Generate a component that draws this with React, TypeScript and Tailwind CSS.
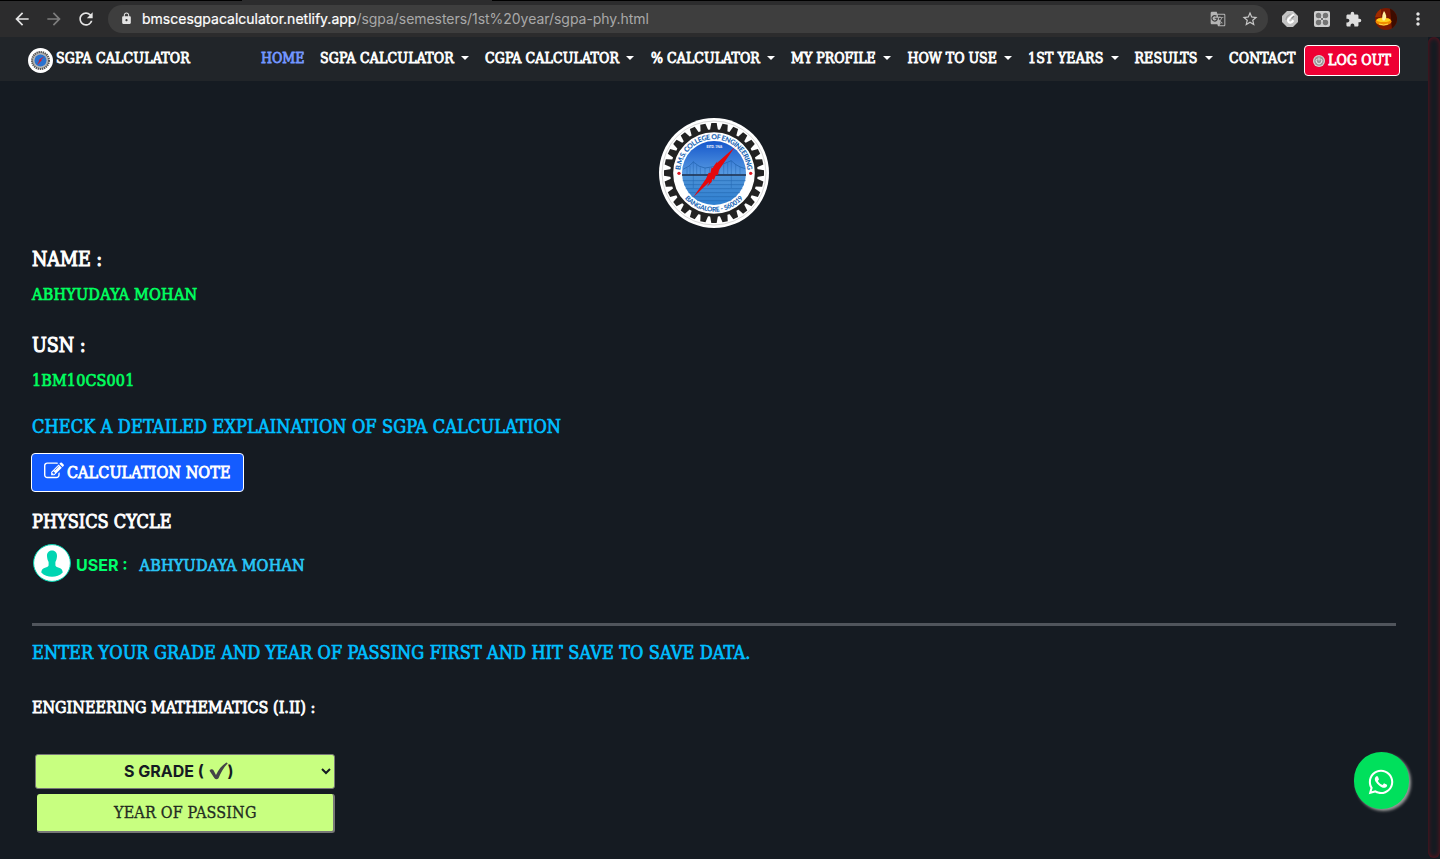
import React from "react";
import { MdArrowBack, MdArrowForward, MdRefresh, MdLock, MdGTranslate, MdStarBorder, MdExtension, MdMoreVert } from "react-icons/md";
import { FaWhatsapp } from "react-icons/fa";

const serif = "font-['DejaVu_Serif_Condensed','DejaVu_Serif',serif] whitespace-nowrap";
const semi = "[-webkit-text-stroke:0.8px_currentColor]";
const medium = "[-webkit-text-stroke:0.7px_currentColor]";

const teeth = Array.from({ length: 28 }, (_, i) => (i * 360) / 28);

function Crest({ className }: { className: string }) {
  return (
    <svg viewBox="0 0 330 330" className={className}>
      <defs>
        <linearGradient id="sky" x1="0" y1="0" x2="0" y2="1">
          <stop offset="0" stopColor="#1557cc" />
          <stop offset="0.5" stopColor="#5598e0" />
          <stop offset="0.56" stopColor="#4a90d6" />
          <stop offset="1" stopColor="#2f7fd0" />
        </linearGradient>
        <path id="arcTop" d="M64 165 A101 101 0 0 1 266 165" />
        <path id="arcBottom" d="M49 165 A116 116 0 0 0 281 165" />
      </defs>
      <circle cx="165" cy="165" r="165" fill="#fff" />
      <circle cx="165" cy="165" r="156" fill="none" stroke="#c4c4c4" strokeWidth="2" />
      <circle cx="165" cy="165" r="127" fill="none" stroke="#222" strokeWidth="9" />
      {teeth.map((a) => (
        <path key={a} d="M153 37L157 15H173L177 37Z" fill="#222" transform={`rotate(${a} 165 165)`} />
      ))}
      <circle cx="165" cy="165" r="96" fill="url(#sky)" />
      <g stroke="#1d5ea8" fill="none" strokeWidth="2">
        <path d="M72 154 Q92 146 103 132 Q120 148 138 150 Q180 148 217 128 Q230 144 259 152" />
        <path d="M103 130V210M217 128V210M84 150v18M93 144v24M113 141v27M124 148v20M138 150v18M152 150v18M166 149v19M180 146v22M194 140v28M206 135v33M230 140v28M243 147v21" strokeWidth="1.2" />
        <path d="M71 188H260M75 200H255M80 212H250M88 224H243M98 236H232M114 248H217" stroke="#246bb4" />
      </g>
      <path d="M69 171H261" stroke="#1c2c48" strokeWidth="5" />
      <path d="M227 88L173 136L175 130L165 143L161 151L158 148L154 165L149 164L141 182L103 238L150 193L148 199L144 206L158 192L160 182L165 186L171 170L177 171L180 156Z" fill="#e5080c" />
      <circle cx="60" cy="166" r="5" fill="#e01822" />
      <circle cx="275" cy="166" r="5" fill="#e01822" />
      <g fill="#1765b4" fontFamily="Lato, sans-serif" fontWeight="900">
        <text fontSize="21" textAnchor="middle">
          <textPath href="#arcTop" startOffset="50%" textLength="300">B.M.S. COLLEGE OF ENGINEERING</textPath>
        </text>
        <text fontSize="20" textAnchor="middle">
          <textPath href="#arcBottom" startOffset="50%" textLength="198">BANGALORE - 560019</textPath>
        </text>
      </g>
      <text x="166" y="90" fontSize="9" fontWeight="700" fontFamily="Lato, sans-serif" fill="#fff" textAnchor="middle">ESTD. 1946</text>
    </svg>
  );
}

function MiniCrest() {
  return (
    <svg viewBox="0 0 25 25" className="size-[25px] shrink-0">
      <circle cx="12.5" cy="12.5" r="12.5" fill="#fff" />
      <circle cx="12.5" cy="12.5" r="8.5" fill="#b4b4b4" stroke="#555" strokeWidth="2" strokeDasharray="1.4 .7" />
      <circle cx="12.5" cy="12.5" r="6" fill="#2a72cf" />
      <path d="M15.500 9l-2.500 2.700.5.700-4 4 2-3.600-.5-.700z" fill="#e0182a" stroke="#e0182a" strokeWidth=".3" />
    </svg>
  );
}

const nav = [
  { label: "HOME", box: "w-[58px] -ml-px mr-px", caret: false, tone: "text-[#7396ff]" },
  { label: "SGPA CALCULATOR", box: "w-[165px] tracking-[0.18px]", caret: true, tone: "text-white" },
  { label: "CGPA CALCULATOR", box: "w-[166px] tracking-[0.12px]", caret: true, tone: "text-white" },
  { label: "% CALCULATOR", box: "w-[140px] tracking-[0.05px]", caret: true, tone: "text-white" },
  { label: "MY PROFILE", box: "w-[116.5px]", caret: true, tone: "text-white" },
  { label: "HOW TO USE", box: "w-[120.5px]", caret: true, tone: "text-white" },
  { label: "1ST YEARS", box: "w-[106.5px] tracking-[0.2px]", caret: true, tone: "text-white" },
  { label: "RESULTS", box: "w-[94.5px] tracking-[0.12px]", caret: true, tone: "text-white" },
  { label: "CONTACT", box: "w-[75px] tracking-[0.12px]", caret: false, tone: "text-white" },
];

function BrowserBar() {
  return (
    <div className="h-[37px] bg-[#2c2c2d] font-['Inter',sans-serif] text-[#e4e4e4]">
      <div className="flex h-px justify-between bg-black pl-[242px]">
        <span className="w-[250px] bg-[#2c2c2d]" />
      </div>
      <div className="flex h-9 items-center">
        <MdArrowBack className="ml-3 size-5" />
        <MdArrowForward className="ml-3 size-5 text-[#7d7d7d]" />
        <MdRefresh className="ml-3 size-5" />
        <div className="ml-3 flex h-7 w-[1160px] items-center rounded-full bg-[#3e3e3e] pl-3 pr-[9px]">
          <MdLock className="-mt-0.5 size-[13px]" />
          <div className="ml-[9px] whitespace-pre text-sm leading-5">
            <span className="text-white [-webkit-text-stroke:0.2px_currentColor]">bmscesgpacalculator.netlify.app</span>
            <span className="tracking-[-0.04px] text-[#a9a9a9]">/sgpa/semesters/1st%20year/sgpa-phy.html</span>
          </div>
          <MdGTranslate className="ml-auto size-4 text-[#b5b5b5]" />
          <MdStarBorder className="ml-[15px] size-[18px] text-[#c8c8c8]" />
        </div>
        <svg viewBox="0 0 16 16" className="ml-[14px] size-4">
          <path d="M5 0h6l5 5v6l-5 5H5l-5-5V5z" fill="#c4c4c4" />
          <path d="M12 3.300L7.500 7Q5 9 6.800 11T11.500 9.300" stroke="#fff" strokeWidth="2.200" fill="none" />
          <path d="M12 5L9.500 7.500" stroke="#888" strokeWidth="1.200" fill="none" />
          <path d="M8.500 3.200Q4 5 4 9" stroke="#a0a0a0" strokeWidth="1.200" fill="none" />
        </svg>
        <svg viewBox="0 0 16 16" className="ml-4 size-4">
          <rect width="16" height="16" rx="2" fill="#cfcfcf" />
          <g fill="#747474">
            <circle cx="4.500" cy="4.500" r="2.700" /><circle cx="11.500" cy="4.500" r="2.700" />
            <circle cx="4.500" cy="11.500" r="2.700" /><circle cx="11.500" cy="11.500" r="2.700" />
          </g>
          <path d="M5 5l6 6M11 5l-6 6" stroke="#747474" strokeWidth="1" />
        </svg>
        <MdExtension className="ml-[15px] size-[17px] text-[#dedede]" />
        <svg viewBox="0 0 22 22" className="ml-[13px] size-[22px]">
          <defs><clipPath id="avatar"><circle cx="11" cy="11" r="11" /></clipPath></defs>
          <g clipPath="url(#avatar)">
            <rect width="22" height="22" fill="#7b1900" />
            <path d="M15 0h7v22h-5z" fill="#3d0c00" />
            <path d="M2 0h4v9H0z" fill="#a02c00" />
            <ellipse cx="8.500" cy="13.500" rx="8" ry="4" fill="#f08c00" />
            <ellipse cx="8.500" cy="12" rx="7" ry="2" fill="#ffd21c" />
            <path d="M4 16q5 2 9 0" stroke="#ffd94a" fill="none" />
            <path d="M9 3q4 5 .8 9.500h-2Q6 9 9 3z" fill="#fff3a0" />
          </g>
        </svg>
        <MdMoreVert className="ml-[11px] size-5" />
      </div>
    </div>
  );
}

function NavBar() {
  return (
    <header className={`flex h-11 bg-[#212529] pl-7 text-sm leading-5 text-white ${serif} ${semi}`}>
      <div className="flex w-[234px] pt-[11px]">
        <MiniCrest />
        <span className="ml-[3px] tracking-[0.18px]">SGPA CALCULATOR</span>
      </div>
      <nav className="flex pt-[11px]">
        {nav.map((n) => (
          <a key={n.label} className={`flex shrink-0 ${n.box} ${n.tone}`}>
            {n.label}
            {n.caret && <span className="ml-[7px] mt-2 h-0 w-0 border-x-4 border-t-4 border-x-transparent border-t-white" />}
          </a>
        ))}
      </nav>
      <button className="mt-2 flex h-[31px] w-24 shrink-0 items-center rounded border border-white bg-[#ee0034] pl-2 tracking-[0.12px]">
        <svg viewBox="0 0 12 12" className="size-3">
          <circle cx="6" cy="6" r="6" fill="#d4d4d4" />
          <circle cx="6" cy="6" r="4.800" fill="#999" />
          <path d="M4.300 3.800a2.800 2.800 0 1 0 3.400 0M6 2.500v3" stroke="#f2f2f2" fill="none" />
        </svg>
        <span className="-mt-px ml-[3px]">LOG OUT</span>
      </button>
    </header>
  );
}

export default function App() {
  return (
    <div className="h-[859px] w-[1440px] overflow-hidden bg-[#151b22]">
      <BrowserBar />
      <div className="flex h-[822px]">
        <div className="w-[1428px]">
          <NavBar />
          <main className={`pl-8 pr-8 text-white ${serif}`}>
            <Crest className="mx-auto mt-[37px] size-[110px]" />
            <h2 className="mt-5 text-[19.5px] leading-6 [-webkit-text-stroke:1px_currentColor]">NAME :</h2>
            <p className={`mt-[13px] text-base leading-5 tracking-[0.24px] text-[#00ff5f] ${medium}`}>ABHYUDAYA MOHAN</p>
            <h2 className="mt-[29px] text-[19.5px] leading-6 [-webkit-text-stroke:1px_currentColor]">USN :</h2>
            <p className={`mt-[13px] text-base leading-5 tracking-[0.13px] text-[#00ff5f] ${medium}`}>1BM10CS001</p>
            <p className={`mt-6 text-lg leading-6 tracking-[0.13px] text-[#00bfff] ${medium}`}>CHECK A DETAILED EXPLAINATION OF SGPA CALCULATION</p>
            <button className={`-ml-px mt-[14px] flex h-[39px] w-[213px] items-center rounded border border-white bg-[#145cff] pl-3 text-base leading-5 tracking-[0.1px] ${semi}`}>
              <svg viewBox="0 0 1792 1792" className="-mt-1 size-[20px]" fill="#fff">
                <path d="M888 1184l116-116-152-152-116 116v56h96v96h56zM1328 464q-16-16-33 1L945 815q-17 17-1 33t33-1l350-350q17-17 1-33zm80 594v190q0 119-84.5 203.5T1120 1536H288q-119 0-203.5-84.5T0 1248V416q0-119 84.5-203.5T288 128h832q63 0 117 25 15 7 18 23 3 17-9 29l-49 49q-14 14-32 8-23-6-45-6H288q-66 0-113 47t-47 113v832q0 66 47 113t113 47h832q66 0 113-47t47-113v-126q0-13 9-22l64-64q15-15 35-7t20 29zM1312 320l288 288-672 672H640V992zm444 132l-92 92-288-288 92-92q28-28 68-28t68 28l152 152q28 28 28 68t-28 68z" />
              </svg>
              <span className="ml-[3px]">CALCULATION NOTE</span>
            </button>
            <h3 className={`mt-[18px] text-lg leading-6 [-webkit-text-stroke:0.9px_currentColor]`}>PHYSICS CYCLE</h3>
            <div className="mt-[10px] flex h-[38px] items-center pl-px text-base leading-5">
              <svg viewBox="0 0 38 38" className="size-[38px]">
                <circle cx="19" cy="19" r="18.400" fill="#fff" stroke="#00d5b2" strokeWidth="1" />
                <path d="M19 6.500c-3.400 0-5.200 2.500-5 5.800.1 2.200.8 4.300 1.600 5.800v3.200c0 1.200-1.500 1.700-3.600 2.500-2.600.8-3.700 2.500-3.700 4.700C11 31.500 15 32.700 19 32.700s8-1.200 10.700-4.200c0-2.200-1.100-3.900-3.700-4.700-2.100-.8-3.600-1.300-3.600-2.500v-3.200c.8-1.500 1.500-3.600 1.600-5.800.2-3.300-1.600-5.800-5-5.800z" fill="#00d5b2" />
              </svg>
              <span className="ml-[5px] mt-1 font-['Inter',sans-serif] font-bold text-[#00ff6c]">USER :</span>
              <span className={`ml-3 mt-1.5 tracking-[0.24px] text-[#29c5f6] ${medium}`}>ABHYUDAYA MOHAN</span>
            </div>
            <hr className="mt-[41px] h-[3px] border-0 bg-[#50555c]" />
            <p className={`mt-[15px] text-lg leading-6 tracking-[0.09px] text-[#00bfff] ${medium}`}>ENTER YOUR GRADE AND YEAR OF PASSING FIRST AND HIT SAVE TO SAVE DATA.</p>
            <p className={`mt-[33px] text-base leading-5 ${semi}`}>ENGINEERING MATHEMATICS (I.II) :</p>
            <div className="ml-[3px] mt-9 flex h-[35px] w-[300px] items-center rounded-[3px] border border-[#777] bg-[#c8ff80] pb-0.5 pl-[88px] pr-[3px] font-['Inter',sans-serif] text-base font-bold text-[#151b22]">
              <span className="whitespace-pre">S GRADE ( </span>
              <svg viewBox="0 0 18 19" className="ml-px h-[18px] w-[19px]" preserveAspectRatio="none">
                <path d="M.5 9.200C1.500 7.500 3.500 7.200 4.300 8.800L6.600 13.700C9 8 12 3.500 16.500.5L17.800 1.300C13.500 6 11.200 11.500 9 17.200C7.800 18.500 6.200 18.500 5.200 17.200z" fill="#444548" />
              </svg>
              <span>)</span>
              <svg viewBox="0 0 10 8" className="ml-auto h-2 w-[10px]">
                <path d="M1 2l4 4 4-4" fill="none" stroke="#151b22" strokeWidth="2" />
              </svg>
            </div>
            <div className="ml-[5px] mt-[5px] flex h-[39px] w-[298px] items-center rounded-[3px] border-b-2 border-r-2 border-[#777] bg-[#c8ff80] pl-[77px] text-base tracking-[0.17px] text-[#222b22] [-webkit-text-stroke:0.3px_currentColor]">
              YEAR OF PASSING
            </div>
          </main>
        </div>
        <div className="h-[821px] w-3 rounded-md bg-[#151b22] shadow-[inset_0_0_5px_#70101c]" />
      </div>
      <a className="fixed left-[1354px] top-[752px] flex h-[57px] w-[54.5px] items-center justify-center rounded-full bg-[#00e05c] pt-[3px] text-white shadow-[2px_2px_3px_#999]">
        <FaWhatsapp className="size-7" />
      </a>
    </div>
  );
}
